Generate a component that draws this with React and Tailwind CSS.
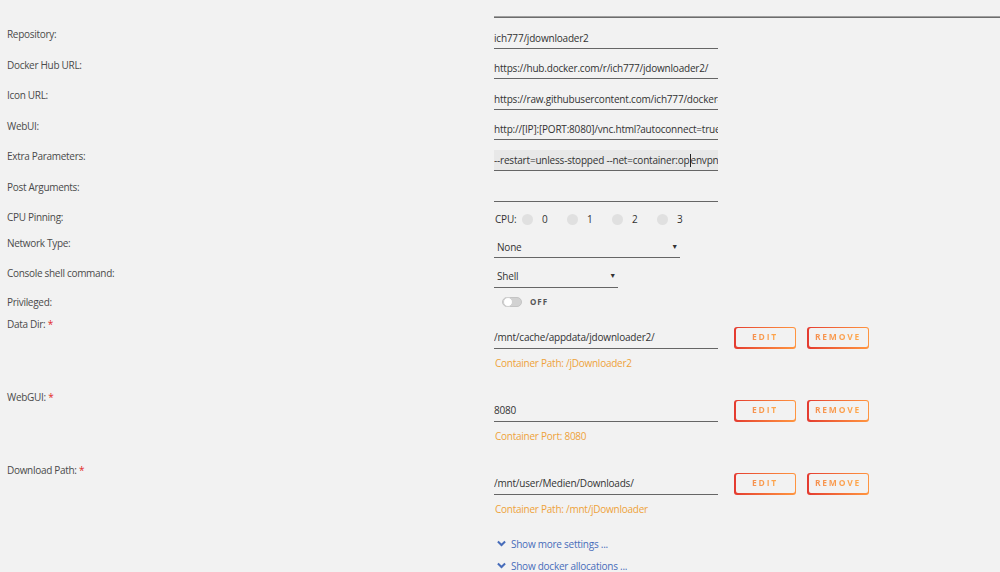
import React from "react";

const labelCls = "text-[10px] leading-[12px] tracking-[-0.3px] text-[#4a4a4a]";

function TextRow({ label, value, height, focused, caretAt }) {
  return (
    <div className="flex" style={{ height }}>
      <div className={`w-[487px] pt-[10px] ${labelCls}`}>{label}</div>
      <div className="flex items-end">
        <div
          className={`w-[224px] h-[21px] pt-[1px] flex items-center border-b border-[#666] overflow-hidden whitespace-nowrap text-[10px] tracking-[-0.2px] text-[#333] ${
            focused ? "bg-[#e8e8e8]" : ""
          }`}
        >
          {caretAt ? (
            <>
              <span>{value.slice(0, caretAt)}</span>
              <span className="inline-block shrink-0 w-px h-[13px] bg-[#222]" />
              <span>{value.slice(caretAt)}</span>
            </>
          ) : (
            <span>{value}</span>
          )}
        </div>
      </div>
    </div>
  );
}

function GradButton({ children, className }) {
  return (
    <div className={`h-[22px] w-[62px] rounded-[3px] p-[1.5px] bg-gradient-to-r from-[#e43a30] to-[#ff9540] ${className}`}>
      <div className="w-full h-full rounded-[2px] bg-[#f2f2f2] flex items-center justify-center">
        <span className="text-[8.5px] font-bold tracking-[1.8px] bg-gradient-to-r from-[#f5904f] to-[#ffa84a] bg-clip-text text-transparent">
          {children}
        </span>
      </div>
    </div>
  );
}

function PathSection({ label, value, sub }) {
  return (
    <div className="flex h-[73px]">
      <div className={`w-[487px] pt-[6px] ${labelCls}`}>
        {label} <span className="text-[#e22828]">*</span>
      </div>
      <div className="flex flex-col pt-[15px]">
        <div className="flex items-center">
          <div className="w-[224px] h-[22px] pt-[1px] flex items-center border-b border-[#666] text-[10px] tracking-[-0.2px] text-[#333] whitespace-nowrap overflow-hidden">
            {value}
          </div>
          <GradButton className="ml-[16px]">EDIT</GradButton>
          <GradButton className="ml-[11px]">REMOVE</GradButton>
        </div>
        <div className="mt-[8px] pl-[1px] text-[10px] leading-[12px] tracking-[-0.25px] text-[#eea23a]">{sub}</div>
      </div>
    </div>
  );
}

function Chevron() {
  return (
    <svg width="9" height="7" viewBox="0 0 10 7" className="mr-[5px]">
      <path d="M1 1.2 L5 5.2 L9 1.2" fill="none" stroke="#486dba" strokeWidth="2.2" />
    </svg>
  );
}

export default function App() {
  const cpus = ["0", "1", "2", "3"];
  return (
    <div
      className="w-[1000px] h-[572px] overflow-hidden bg-[#f2f2f2] pl-[7px]"
      style={{ fontFamily: '"Open Sans", "Noto Sans", sans-serif' }}
    >
      <div className="pt-[16px] pl-[487px]">
        <div className="h-[2px] bg-gradient-to-b from-[#bbb] to-[#555]" />
      </div>

      <TextRow label="Repository:" value="ich777/jdownloader2" height="30.6px" />
      <TextRow label="Docker Hub URL:" value="https://hub.docker.com/r/ich777/jdownloader2/" height="30.6px" />
      <TextRow label="Icon URL:" value="https://raw.githubusercontent.com/ich777/docker-templates/master/ich777/images/jdownloader.png" height="30.6px" />
      <TextRow label="WebUI:" value="http://[IP]:[PORT:8080]/vnc.html?autoconnect=true" height="30.6px" />
      <TextRow
        label="Extra Parameters:"
        value="--restart=unless-stopped --net=container:openvpn"
        height="30.6px"
        focused
        caretAt={43}
      />
      <TextRow label="Post Arguments:" value="" height="30.6px" />

      {/* CPU Pinning */}
      <div className="flex h-[28px]">
        <div className={`w-[487px] pt-[9px] ${labelCls}`}>CPU Pinning:</div>
        <div className="flex items-center pt-[7px] text-[10px] text-[#333]">
          <span className="w-[28px] pl-[1px] tracking-[-0.2px]">CPU:</span>
          {cpus.map((c) => (
            <div key={c} className="flex items-center w-[45px]">
              <span className="w-[11px] h-[11px] rounded-full bg-[#e0e0e0]" />
              <span className="ml-[9px]">{c}</span>
            </div>
          ))}
        </div>
      </div>

      {/* Network Type */}
      <div className="flex h-[28px]">
        <div className={`w-[487px] pt-[7px] ${labelCls}`}>Network Type:</div>
        <div className="flex items-end">
          <div className="w-[186px] h-[20px] pl-[3px] pr-[2px] flex items-center justify-between border-b border-[#666] text-[10px] tracking-[-0.2px] text-[#333]">
            <span>None</span>
            <span className="text-[7px]">▼</span>
          </div>
        </div>
      </div>

      {/* Console shell */}
      <div className="flex h-[30px]">
        <div className={`w-[487px] pt-[9px] ${labelCls}`}>Console shell command:</div>
        <div className="flex items-end">
          <div className="w-[124px] h-[21px] pl-[3px] pr-[2px] flex items-center justify-between border-b border-[#666] text-[10px] tracking-[-0.2px] text-[#333]">
            <span>Shell</span>
            <span className="text-[7px]">▼</span>
          </div>
        </div>
      </div>

      {/* Privileged */}
      <div className="flex h-[24px]">
        <div className={`w-[487px] pt-[8px] ${labelCls}`}>Privileged:</div>
        <div className="flex items-center pl-[8px] pt-[4px]">
          <div className="w-[20px] h-[10px] rounded-full bg-[#d2d2d2] border border-[#c4c4c4] flex items-center">
            <span className="w-[10px] h-[10px] rounded-full bg-white border border-[#cfcfcf]" />
          </div>
          <span className="ml-[8px] text-[8px] font-bold tracking-[1px] text-[#555]">OFF</span>
        </div>
      </div>

      <PathSection label="Data Dir:" value="/mnt/cache/appdata/jdownloader2/" sub="Container Path: /jDownloader2" />
      <PathSection label="WebGUI:" value="8080" sub="Container Port: 8080" />
      <PathSection label="Download Path:" value="/mnt/user/Medien/Downloads/" sub="Container Path: /mnt/jDownloader" />

      <div className="pl-[490px] pt-[7px] flex flex-col gap-[10px] text-[10px] leading-[12px] tracking-[-0.25px] text-[#486dba]">
        <div className="flex items-center">
          <Chevron />
          <span>Show more settings ...</span>
        </div>
        <div className="flex items-center">
          <Chevron />
          <span>Show docker allocations ...</span>
        </div>
      </div>
    </div>
  );
}
